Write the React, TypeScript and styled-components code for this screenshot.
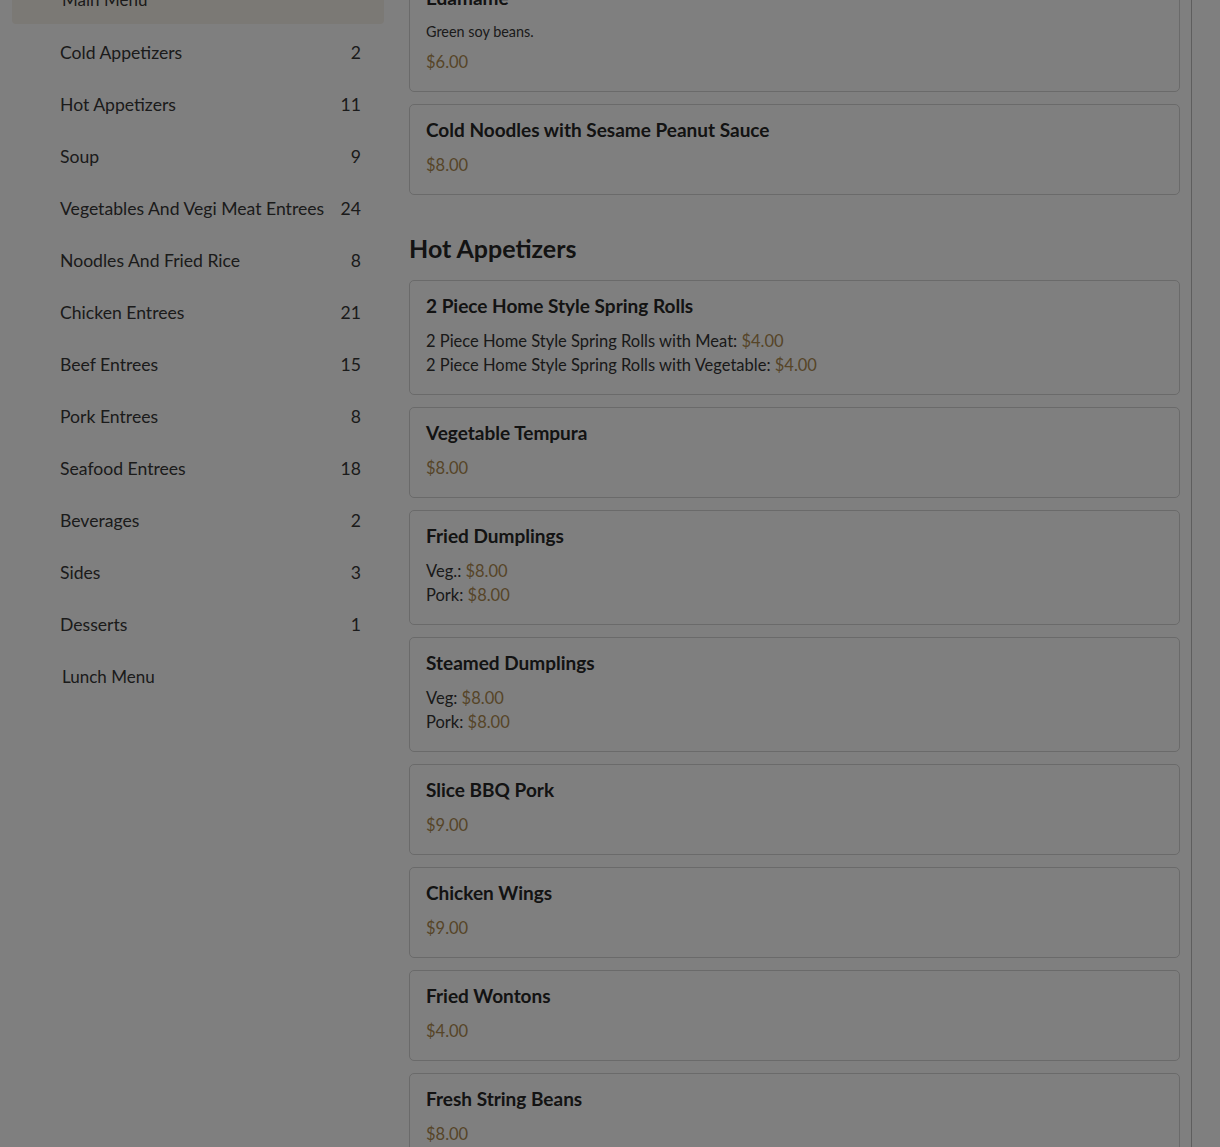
import React from 'react';
import styled, { createGlobalStyle } from 'styled-components';

type Option = { label: string; price: string };
type Dish = { name: string; description?: string; price?: string; options?: Option[] };
type Section = { title?: string; dishes: Dish[] };

const categories: { name: string; count: number }[] = [
	{ name: 'Cold Appetizers', count: 2 },
	{ name: 'Hot Appetizers', count: 11 },
	{ name: 'Soup', count: 9 },
	{ name: 'Vegetables And Vegi Meat Entrees', count: 24 },
	{ name: 'Noodles And Fried Rice', count: 8 },
	{ name: 'Chicken Entrees', count: 21 },
	{ name: 'Beef Entrees', count: 15 },
	{ name: 'Pork Entrees', count: 8 },
	{ name: 'Seafood Entrees', count: 18 },
	{ name: 'Beverages', count: 2 },
	{ name: 'Sides', count: 3 },
	{ name: 'Desserts', count: 1 },
];

const sections: Section[] = [
	{
		dishes: [
			{ name: 'Edamame', description: 'Green soy beans.', price: '$6.00' },
			{ name: 'Cold Noodles with Sesame Peanut Sauce', price: '$8.00' },
		],
	},
	{
		title: 'Hot Appetizers',
		dishes: [
			{
				name: '2 Piece Home Style Spring Rolls',
				options: [
					{ label: '2 Piece Home Style Spring Rolls with Meat', price: '$4.00' },
					{ label: '2 Piece Home Style Spring Rolls with Vegetable', price: '$4.00' },
				],
			},
			{ name: 'Vegetable Tempura', price: '$8.00' },
			{
				name: 'Fried Dumplings',
				options: [
					{ label: 'Veg.', price: '$8.00' },
					{ label: 'Pork', price: '$8.00' },
				],
			},
			{
				name: 'Steamed Dumplings',
				options: [
					{ label: 'Veg', price: '$8.00' },
					{ label: 'Pork', price: '$8.00' },
				],
			},
			{ name: 'Slice BBQ Pork', price: '$9.00' },
			{ name: 'Chicken Wings', price: '$9.00' },
			{ name: 'Fried Wontons', price: '$4.00' },
			{ name: 'Fresh String Beans', price: '$8.00' },
		],
	},
];

export default function App(): JSX.Element {
	return (
		<>
			<GlobalStyle />
			<Page>
				<Sidebar>
					<MenuHeader>Main Menu</MenuHeader>
					{categories.map((c) => (
						<CategoryRow key={c.name}>
							<span>{c.name}</span>
							<span>{c.count}</span>
						</CategoryRow>
					))}
					<MenuHeader plain>Lunch Menu</MenuHeader>
				</Sidebar>
				<Main>
					{sections.map((s, i) => (
						<SectionBlock key={i}>
							{s.title && <SectionTitle>{s.title}</SectionTitle>}
							<CardList>
								{s.dishes.map((d) => (
									<Card key={d.name}>
										<DishName>{d.name}</DishName>
										{d.description && <Description>{d.description}</Description>}
										{d.price && <Price>{d.price}</Price>}
										{d.options && (
											<Options>
												{d.options.map((o) => (
													<OptionLine key={o.label}>
														{o.label}: <Price as="span">{o.price}</Price>
													</OptionLine>
												))}
											</Options>
										)}
									</Card>
								))}
							</CardList>
						</SectionBlock>
					))}
				</Main>
			</Page>
			<Backdrop />
		</>
	);
}

const GlobalStyle = createGlobalStyle`
	html, body {
		margin: 0;
		padding: 0;
		height: 100%;
		overflow: hidden;
		background: #ffffff;
	}
	body {
		font-family: Lato, "Open Sans", sans-serif;
		color: #333333;
	}
`;

const Page = styled.div`
	display: flex;
	align-items: flex-start;
	gap: 25px;
	margin-top: -28px;
	padding-left: 12px;
`;

const Sidebar = styled.nav`
	width: 372px;
	flex-shrink: 0;
	display: flex;
	flex-direction: column;
`;

const MenuHeader = styled.div<{ plain?: boolean }>`
	height: 52px;
	box-sizing: border-box;
	display: flex;
	align-items: center;
	padding: ${(p) => (p.plain ? '4px' : '2px')} 0 0 50px;
	font-size: 17px;
	color: #363636;
	background: ${(p) => (p.plain ? 'transparent' : '#f6f2ea')};
	border-radius: 4px;
`;

const CategoryRow = styled.div`
	height: 52px;
	box-sizing: border-box;
	display: flex;
	align-items: center;
	justify-content: space-between;
	padding: 4px 23px 0 48px;
	font-size: 17.6px;
	color: #363636;
`;

const Main = styled.main`
	width: 771px;
	padding-right: 11px;
	border-right: 1px solid #bcbcbc;
	min-height: 1300px;
	display: flex;
	flex-direction: column;
`;

const SectionBlock = styled.section`
	display: flex;
	flex-direction: column;
	& + & {
		margin-top: 37px;
	}
`;

const SectionTitle = styled.h2`
	margin: 0 0 16px;
	font-size: 25px;
	line-height: 32px;
	font-weight: 700;
	color: #262626;
`;

const CardList = styled.div`
	display: flex;
	flex-direction: column;
	gap: 12px;
`;

const Card = styled.article`
	border: 1px solid #d4d4d4;
	border-radius: 5px;
	background: #ffffff;
	padding: 15px 16px 17px;
	display: flex;
	flex-direction: column;
`;

const DishName = styled.h3`
	margin: 0 0 13px;
	font-size: 19px;
	line-height: 20px;
	font-weight: 700;
	color: #262626;
`;

const Description = styled.p`
	margin: 1px 0 8px;
	font-size: 14.4px;
	line-height: 20px;
	color: #363636;
`;

const Price = styled.div`
	font-size: 16.5px;
	line-height: 24px;
	color: #ad8a50;
`;

const Options = styled.div`
	display: flex;
	flex-direction: column;
`;

const OptionLine = styled.div`
	font-size: 16.5px;
	line-height: 24px;
	color: #333333;
`;

const Backdrop = styled.div`
	position: fixed;
	inset: 0;
	background: rgba(0, 0, 0, 0.5);
`;
